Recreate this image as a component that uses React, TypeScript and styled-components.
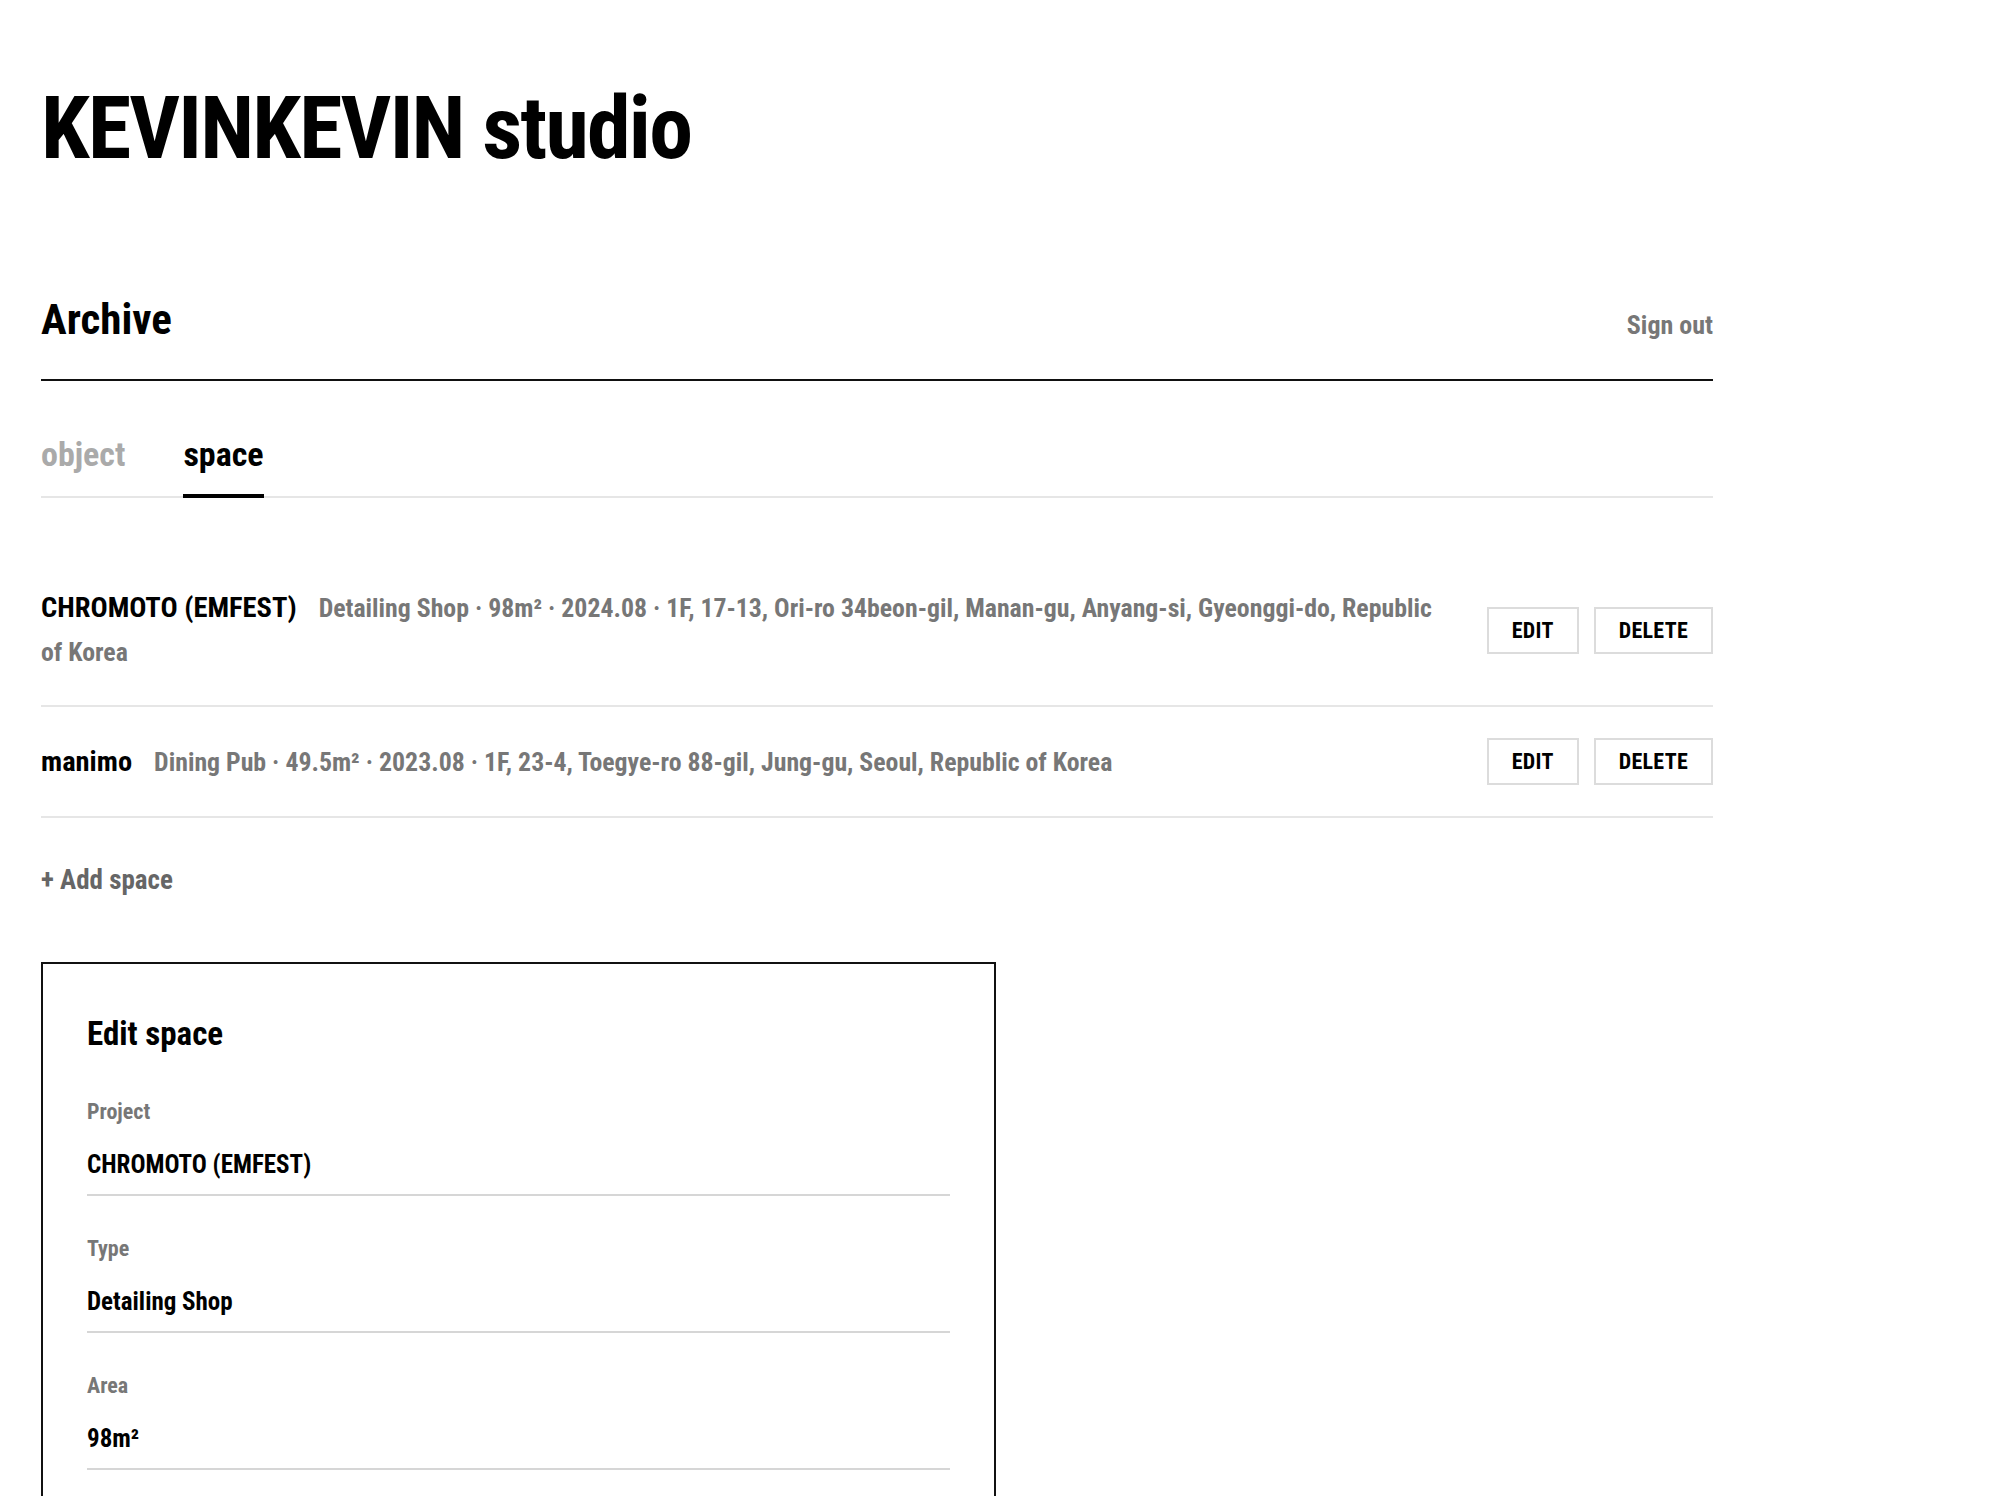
import styled, { createGlobalStyle, css } from "styled-components";

const GlobalStyle = createGlobalStyle`
  * {
    box-sizing: border-box;
  }

  body {
    margin: 0;
    background: #fff;
    color: #000;
    font-family: "Roboto Condensed", Roboto, "Liberation Sans", sans-serif;
    font-stretch: condensed;
    font-weight: 700;
  }
`;

type Space = {
  id: number;
  project: string;
  type: string;
  area: string;
  year: string;
  address: string;
};

const SPACES: Space[] = [
  {
    id: 1,
    project: "CHROMOTO (EMFEST)",
    type: "Detailing Shop",
    area: "98m²",
    year: "2024.08",
    address: "1F, 17-13, Ori-ro 34beon-gil, Manan-gu, Anyang-si, Gyeonggi-do, Republic of Korea",
  },
  {
    id: 2,
    project: "manimo",
    type: "Dining Pub",
    area: "49.5m²",
    year: "2023.08",
    address: "1F, 23-4, Toegye-ro 88-gil, Jung-gu, Seoul, Republic of Korea",
  },
];

export default function App() {
  const editing = SPACES[0];

  return (
    <>
      <GlobalStyle />
      <StPage>
        <StLogo>KEVINKEVIN studio</StLogo>

        <StHeader>
          <StHeading>Archive</StHeading>
          <StSignOut type="button">Sign out</StSignOut>
        </StHeader>

        <StTabs>
          <StTab type="button">object</StTab>
          <StTab type="button" active>
            space
          </StTab>
        </StTabs>

        <StList>
          {SPACES.map((space) => (
            <StRow key={space.id}>
              <StRowText>
                <StName>{space.project}</StName>
                <StMeta>
                  {space.type} · {space.area} · {space.year} · {space.address}
                </StMeta>
              </StRowText>
              <StActions>
                <StButton type="button">EDIT</StButton>
                <StButton type="button">DELETE</StButton>
              </StActions>
            </StRow>
          ))}
        </StList>

        <StAddButton type="button">+ Add space</StAddButton>

        <StEditBox>
          <StEditTitle>Edit space</StEditTitle>
          <StField>
            <StLabel>Project</StLabel>
            <StInput defaultValue={editing.project} />
          </StField>
          <StField>
            <StLabel>Type</StLabel>
            <StInput defaultValue={editing.type} />
          </StField>
          <StField>
            <StLabel>Area</StLabel>
            <StInput defaultValue={editing.area} />
          </StField>
          <StField>
            <StLabel>Year</StLabel>
            <StInput defaultValue={editing.year} />
          </StField>
          <StField>
            <StLabel>Address</StLabel>
            <StInput defaultValue={editing.address} />
          </StField>
        </StEditBox>
      </StPage>
    </>
  );
}

const StPage = styled.main`
  max-width: 1754px;
  padding: 84px 41px 120px;
`;

const StLogo = styled.h1`
  margin: 0;

  font-size: 88px;
  line-height: 1;
  letter-spacing: -1.8px;
`;

const StHeader = styled.header`
  margin-top: 126px;
  padding-bottom: 38px;

  display: flex;
  justify-content: space-between;
  align-items: baseline;

  border-bottom: 2px solid #111;
`;

const StHeading = styled.h2`
  margin: 0;

  font-size: 43px;
  line-height: 1;
`;

const StSignOut = styled.button`
  padding: 0;

  border: none;
  background: none;

  font: inherit;
  font-size: 26px;
  line-height: 1;
  color: #777;

  &:hover {
    cursor: pointer;
  }
`;

const StTabs = styled.nav`
  margin-top: 56px;

  display: flex;
  gap: 58px;

  border-bottom: 2px solid #e6e6e6;
`;

const StTab = styled.button<{ active?: boolean }>`
  margin-bottom: -2px;
  padding: 0 0 23px;

  border: none;
  border-bottom: 4px solid transparent;
  background: none;

  font: inherit;
  font-size: 34px;
  line-height: 1;
  color: #aaa;

  &:hover {
    cursor: pointer;
  }

  ${({ active }) =>
    active &&
    css`
      color: #000;
      border-bottom-color: #000;
    `};
`;

const StList = styled.ul`
  margin: 57px 0 0;
  padding: 0;

  list-style: none;
`;

const StRow = styled.li`
  padding: 31px 0;

  display: flex;
  align-items: center;
  gap: 40px;

  border-bottom: 2px solid #e6e6e6;
`;

const StRowText = styled.p`
  flex: 1;
  margin: 0;

  font-size: 26px;
  line-height: 44px;
`;

const StName = styled.span`
  margin-right: 22px;

  font-size: 28.5px;
  color: #000;
`;

const StMeta = styled.span`
  font-size: 25.8px;
  color: #777;
`;

const StActions = styled.div`
  flex-shrink: 0;

  display: flex;
  gap: 15px;
`;

const StButton = styled.button`
  height: 47px;
  padding: 0 23px;

  border: 2px solid #dcdcdc;
  background: #fff;

  font: inherit;
  font-size: 22px;
  letter-spacing: 0.3px;
  color: #000;

  &:hover {
    cursor: pointer;
  }
`;

const StAddButton = styled.button`
  margin-top: 46px;
  padding: 0;

  display: block;

  border: none;
  background: none;

  font: inherit;
  font-size: 27px;
  line-height: 1.2;
  color: #666;

  &:hover {
    cursor: pointer;
  }
`;

const StEditBox = styled.section`
  width: 955px;
  margin-top: 66px;
  padding: 50px 44px 60px;

  display: flex;
  flex-direction: column;
  gap: 40px;

  border: 2px solid #111;
`;

const StEditTitle = styled.h3`
  margin: 0 0 5px;

  font-size: 33px;
  line-height: 40px;
`;

const StField = styled.label`
  display: flex;
  flex-direction: column;
  gap: 13px;
`;

const StLabel = styled.span`
  font-size: 22px;
  line-height: 26px;
  color: #777;
`;

const StInput = styled.input`
  padding: 12px 0 14px;

  border: none;
  border-bottom: 2px solid #d6d6d6;
  outline: none;
  background: none;

  font: inherit;
  font-size: 25px;
  line-height: 30px;
  color: #000;
`;
